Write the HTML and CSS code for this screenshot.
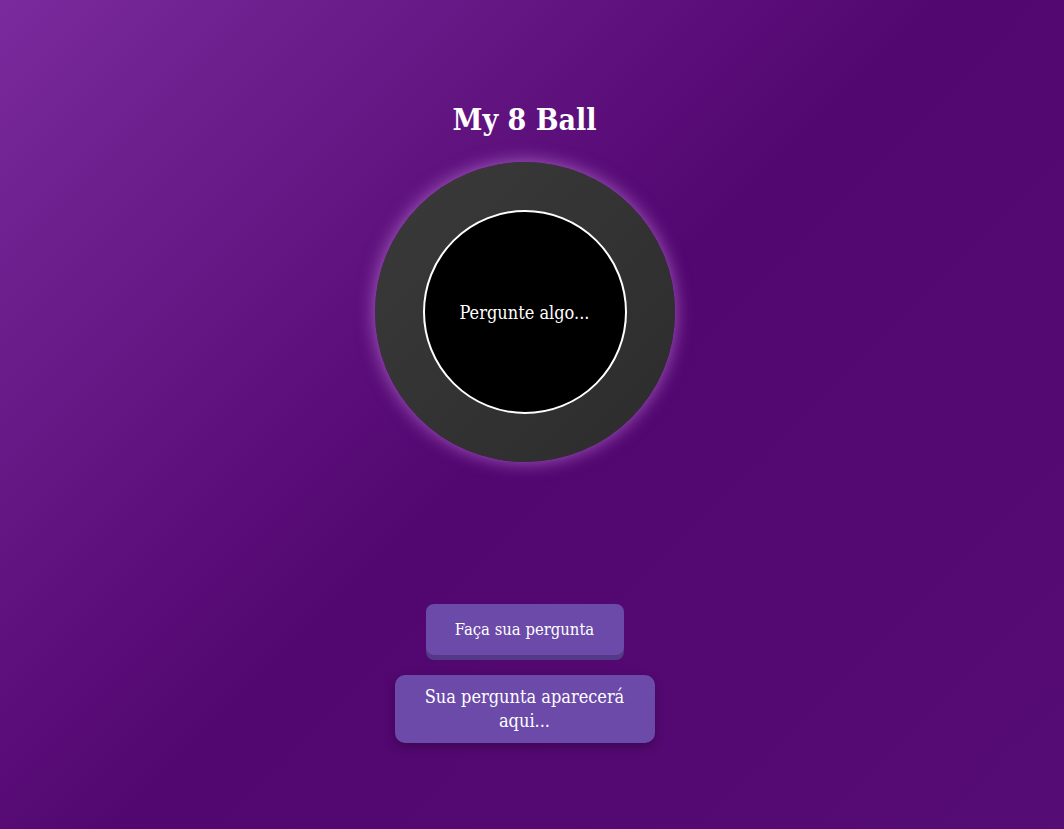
FILE: index.html
```html
<!DOCTYPE html>
<html lang="pt">
<head>
<meta charset="utf-8">
<title>My 8 Ball</title>
<link rel="stylesheet" href="styles.css">
</head>
<body>
<main class="app">
  <h1 class="title">My 8 Ball</h1>
  <div class="ball">
    <div class="window">
      <p class="answer">Pergunte algo...</p>
    </div>
  </div>
  <button class="ask">Faça sua pergunta</button>
  <div class="question">Sua pergunta aparecerá aqui...</div>
</main>
</body>
</html>
```

FILE: styles.css
```css
* { box-sizing: border-box; }
html, body { margin: 0; height: 100%; }
body {
  font-family: "Roboto Slab", "DejaVu Serif Condensed", "DejaVu Serif", serif;
  font-stretch: condensed;
  color: #fff;
  background: linear-gradient(135deg, #7a2a9c 0%, #52066f 50%, #560c75 100%);
  min-height: 829px;
}
.app {
  display: flex;
  flex-direction: column;
  align-items: center;
  padding-top: 100px;
  padding-right: 15px;
}
.title {
  margin: 0;
  font-size: 30px;
  font-weight: 700;
  line-height: 40px;
}
.ball {
  margin-top: 22px;
  width: 300px;
  height: 300px;
  border-radius: 50%;
  background: linear-gradient(135deg, #3a3a3a, #2c2c2c);
  box-shadow: 0 0 18px rgba(230, 170, 255, 0.55);
  display: flex;
  align-items: center;
  justify-content: center;
}
.window {
  width: 204px;
  height: 204px;
  border-radius: 50%;
  background: #000;
  border: 2px solid #fff;
  display: flex;
  align-items: center;
  justify-content: center;
}
.answer {
  margin: 0;
  font-size: 18px;
}
.ask {
  margin-top: 142px;
  width: 198px;
  height: 51px;
  border: none;
  border-radius: 8px;
  background: #6b4aaa;
  color: #fff;
  font-family: inherit;
  font-stretch: condensed;
  font-size: 16.5px;
  box-shadow: 0 5px 0 #543a86;
}
.question {
  margin-top: 20px;
  width: 260px;
  padding: 10px 18px;
  border-radius: 10px;
  background: #6b4aaa;
  font-size: 18px;
  line-height: 24px;
  text-align: center;
  box-shadow: 0 4px 10px rgba(0, 0, 0, 0.25);
}
```
